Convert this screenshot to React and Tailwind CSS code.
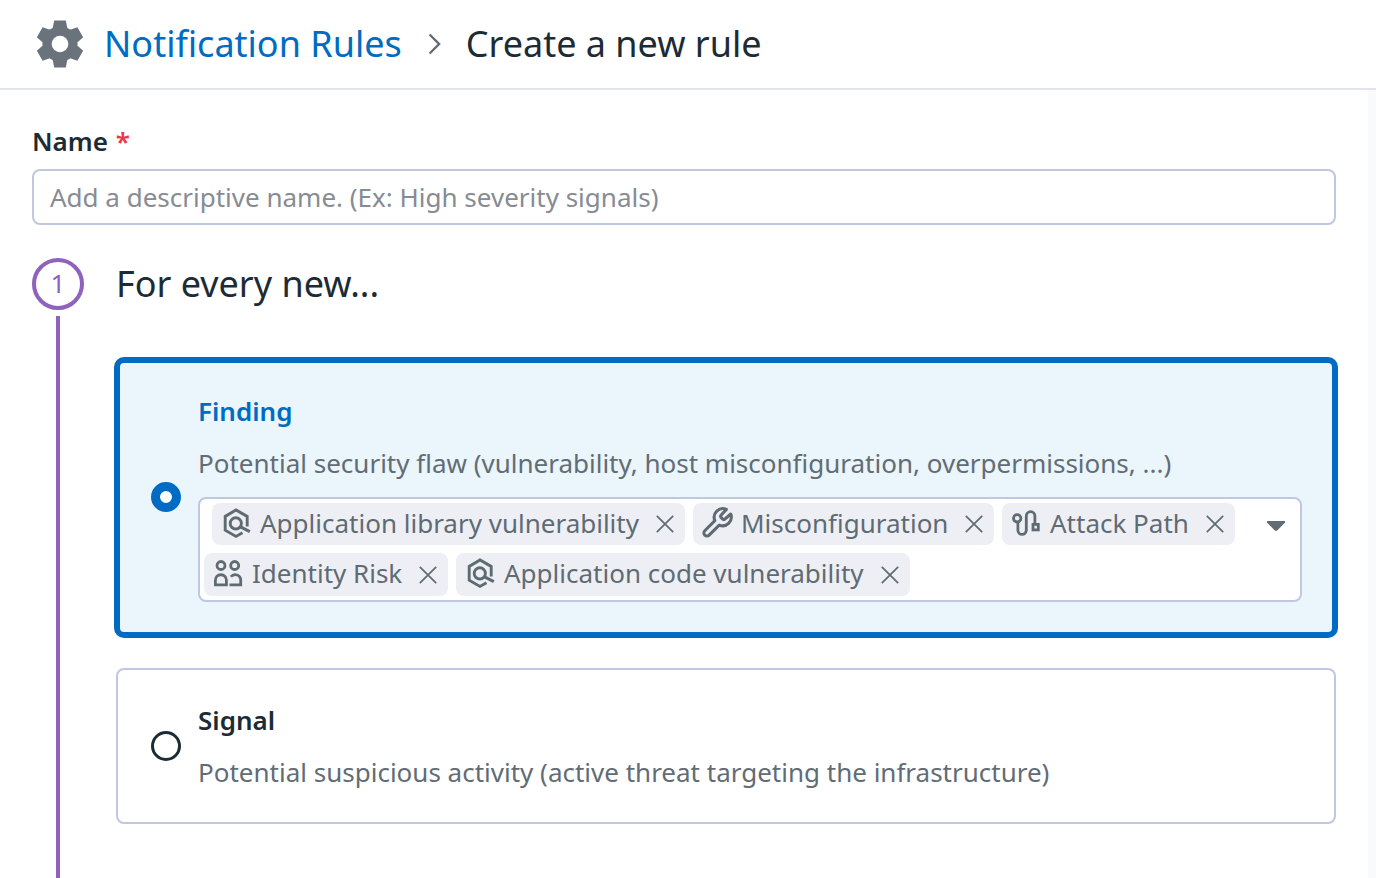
import React from "react";

function GearIcon() {
  const teeth = [0, 60, 120, 180, 240, 300];
  return (
    <svg className="h-12 w-12 shrink-0 text-[#6a737b]" viewBox="-24 -24 48 48" fill="currentColor">
      <mask id="hub">
        <rect x="-24" y="-24" width="48" height="48" fill="white" />
        <circle r="8.3" fill="black" />
      </mask>
      <g mask="url(#hub)">
        <circle r="17.6" />
        {teeth.map((a) => (
          <path key={a} transform={`rotate(${a})`} d="M-5.8 -23.4H5.8L7.3 -16H-7.3Z" />
        ))}
      </g>
    </svg>
  );
}

function ShieldIcon() {
  return (
    <svg className="h-8 w-[31px] shrink-0 overflow-visible" viewBox="-1 0.6 31 32" fill="none" stroke="currentColor" strokeWidth="2.9">
      <path d="M25.2 19V9L14 2.6L3.2 9V22.8L14 29L20.5 25.3" />
      <circle cx="13.8" cy="16" r="5.6" />
      <path d="M18 19.3L27.8 24.2" strokeWidth="3.1" />
    </svg>
  );
}

function WrenchIcon() {
  return (
    <svg className="h-8 w-[31px] shrink-0 overflow-visible" viewBox="1.7 1.7 21.3 22" fill="none" stroke="currentColor" strokeWidth="2.1" strokeLinejoin="round">
      <path d="M14.9 6.5a1.3 1.3 0 0 0 0 1.8l0.9 0.9a1.3 1.3 0 0 0 1.8 0l3.87-3.37a6 6 0 0 1-7.94 7.6l-6.91 6.91a2.12 2.12 0 0 1-3-3l6.91-6.91a6 6 0 0 1 7.94-7.8z" />
    </svg>
  );
}

function PathIcon() {
  return (
    <svg className="h-8 w-[31px] shrink-0 overflow-visible" viewBox="0 0 31 32" fill="none" stroke="currentColor" strokeWidth="2.8">
      <circle cx="6.2" cy="10.3" r="3.7" />
      <path d="M6.9 14V22.2a4.2 4.2 0 0 0 8.4 0V8a4.3 4.3 0 0 1 8.6 0V16" />
      <rect x="22" y="16.4" width="5.3" height="5.5" />
    </svg>
  );
}

function PeopleIcon() {
  return (
    <svg className="h-8 w-[31px] shrink-0 overflow-visible" viewBox="0 0 31 32" fill="none" stroke="currentColor" strokeWidth="2.8">
      <circle cx="8" cy="7.5" r="4" />
      <circle cx="21.7" cy="7.5" r="4" />
      <path d="M2.4 26.9V22.25a5.5 5.5 0 0 1 11 0V26.9Z" />
      <path d="M16.5 26.9H27.7V22.25a5.5 5.5 0 0 0-9.8-3.5" />
    </svg>
  );
}

function CloseIcon() {
  return (
    <svg className="h-5 w-5 shrink-0" viewBox="0 0 20 20" fill="none" stroke="currentColor" strokeWidth="1.7">
      <path d="M1.8 1.8L18.2 18.2M18.2 1.8L1.8 18.2" />
    </svg>
  );
}

function Tag({ icon, label, size, inner = "" }) {
  return (
    <span className={`flex items-center justify-between rounded-lg bg-[#eeeff5] pr-2.5 pl-[9px] ${size}`}>
      <span className={`flex items-center gap-2 ${inner}`}>
        {icon}
        <span className="pb-0.5 text-[26px] leading-[40px] whitespace-nowrap">{label}</span>
      </span>
      <CloseIcon />
    </span>
  );
}

export default function App() {
  return (
    <div className="flex h-[878px] w-[1376px] flex-col overflow-hidden bg-white font-['Noto_Sans',sans-serif] text-[#1c2b34]">
      <header className="flex h-[90px] shrink-0 items-center border-b-2 border-[#e1e4eb] pl-9 text-[36px]">
        <GearIcon />
        <a className="ml-5 whitespace-nowrap text-[#006bc2]">Notification Rules</a>
        <svg className="mx-6 h-6 w-4 shrink-0" viewBox="0 0 16 24" fill="none" stroke="#626c75" strokeWidth="2.4">
          <path d="M3.6 2.5L13.1 12L3.6 21.5" />
        </svg>
        <h1 className="whitespace-nowrap">Create a new rule</h1>
      </header>
      <div className="flex flex-1">
        <main className="flex flex-1 flex-col pt-[33px] pr-8 pl-8">
          <label className="h-[46px] text-[26px] leading-[37px] font-semibold">
            Name <span className="ml-px text-[#eb364b]">*</span>
          </label>
          <div className="flex h-14 shrink-0 items-center rounded-lg border-2 border-[#c0c7e0] pl-4 text-[26px] text-[#878b93]">
            Add a descriptive name. (Ex: High severity signals)
          </div>
          <div className="mt-[33px] flex flex-1 gap-8">
            <div className="flex w-[52px] shrink-0 flex-col items-center">
              <div className="flex h-[52px] w-[52px] shrink-0 items-center justify-center rounded-full border-4 border-[#8f62be] pb-0.5 text-[26px] text-[#8f62be]">1</div>
              <div className="mt-1.5 w-1 flex-1 bg-[#8f62be]" />
            </div>
            <div className="flex flex-1 flex-col">
              <h2 className="h-[52px] text-[36px] leading-[52px]">For every new...</h2>
              <section className="-mx-0.5 mt-[47px] flex h-[281px] shrink-0 items-center rounded-[10px] border-6 border-[#006bc2] bg-[#eaf5fc] pr-[30px] pl-[31px]">
                <span className="mr-[17px] mb-0.5 h-[30px] w-[30px] shrink-0 rounded-full border-9 border-[#006bc2] bg-white" />
                <div className="flex h-full flex-1 flex-col pt-[29px]">
                  <h3 className="h-[52px] text-[26px] leading-[38px] font-semibold text-[#006bc2]">Finding</h3>
                  <p className="h-[53px] text-[26px] leading-[38px] whitespace-nowrap text-[#626c75]">
                    Potential security flaw (vulnerability, host misconfiguration, overpermissions, ...)
                  </p>
                  <div className="flex h-[105px] flex-col gap-2 rounded-lg border-2 border-[#c0c7e0] bg-white pt-1 pr-3.5 pl-1 text-[#5f6b73]">
                    <div className="flex items-center gap-2 pl-2">
                      <Tag icon={<ShieldIcon />} label="Application library vulnerability" size="h-[42px] w-[473px]" />
                      <Tag icon={<WrenchIcon />} label="Misconfiguration" size="h-[42px] w-[301px]" />
                      <Tag icon={<PathIcon />} label="Attack Path" size="h-[42px] w-[233px]" />
                      <svg className="mt-1 ml-auto h-3 w-5" viewBox="0 0 20 12" fill="#626c75">
                        <path d="M1 1H19V2.5L11.5 10.2Q10 11.5 8.5 10.2L1 2.5Z" />
                      </svg>
                    </div>
                    <div className="flex gap-2">
                      <Tag icon={<PeopleIcon />} label="Identity Risk" size="h-[43px] w-[244px]" inner="mb-0.5" />
                      <Tag icon={<ShieldIcon />} label="Application code vulnerability" size="h-[43px] w-[454px]" inner="mb-0.5" />
                    </div>
                  </div>
                </div>
              </section>
              <section className="mt-[30px] flex h-[156px] shrink-0 items-center rounded-lg border-2 border-[#c0c7e0] pl-[33px]">
                <span className="mr-[17px] h-[30px] w-[30px] shrink-0 rounded-full border-3 border-[#1c2b34]" />
                <div className="flex flex-col">
                  <h3 className="h-[52px] text-[26px] leading-[38px] font-semibold">Signal</h3>
                  <p className="text-[26px] leading-[38px] whitespace-nowrap text-[#626c75]">
                    Potential suspicious activity (active threat targeting the infrastructure)
                  </p>
                </div>
              </section>
            </div>
          </div>
        </main>
        <div className="w-2 bg-[#f9fafc]" />
      </div>
    </div>
  );
}
